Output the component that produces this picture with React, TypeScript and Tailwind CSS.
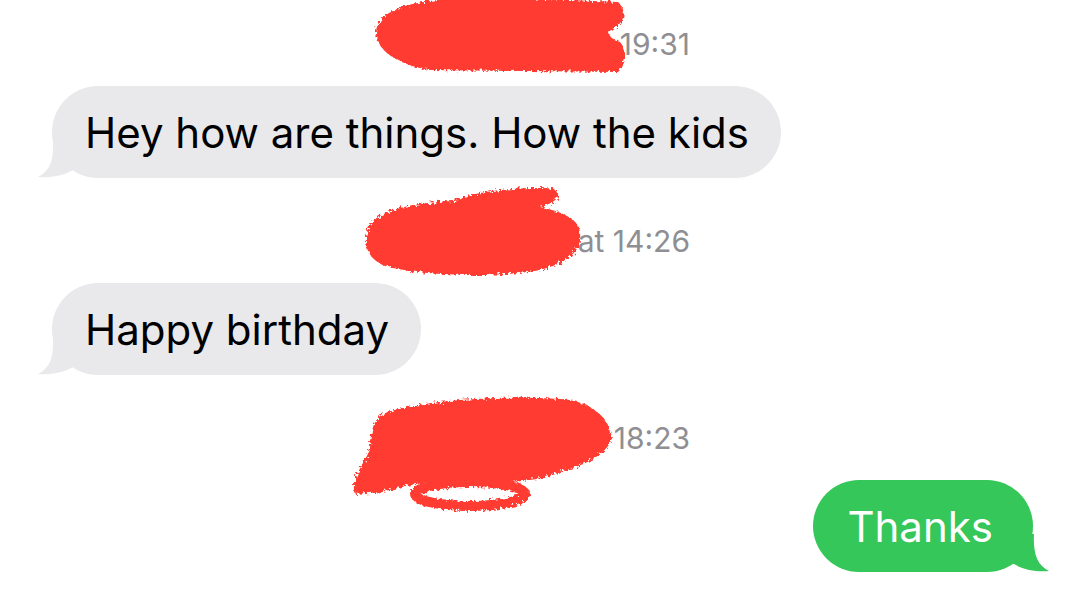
import React from 'react';

const font = { fontFamily: 'Inter, "Noto Sans", sans-serif' };

// red marker scribble drawn over the hidden sender names
const Scribble = ({ variant, offsetY }: { variant: number; offsetY: number }) => (
    <svg className="absolute left-0 top-0 overflow-visible pointer-events-none" width="1089" height="40">
        <defs>
            <filter id={`rough-${variant}`} x="-10%" y="-30%" width="120%" height="160%">
                <feTurbulence type="fractalNoise" baseFrequency="0.35" numOctaves="2" seed={variant} />
                <feDisplacementMap in="SourceGraphic" scale="7" />
            </filter>
        </defs>
        <g transform={`translate(0,${-offsetY})`} fill="#ff3b30" filter={`url(#rough-${variant})`}>
            {variant === 1 && (
                <path d="M395,10 C410,2 450,-4 520,-2 L618,2 C626,8 626,22 614,28 C606,32 608,38 620,42 C628,50 626,66 618,72 L430,70 C405,66 385,56 378,42 C372,28 380,16 395,10 Z" />
            )}
            {variant === 2 && (
                <>
                    <path d="M370,225 C380,207 430,200 470,201 C500,196 540,189 556,191 C563,197 552,204 540,207 C560,211 580,219 580,233 C582,250 570,262 540,270 C500,278 420,276 385,266 C365,258 362,240 370,225 Z" />
                    <path d="M455,200 C480,190 530,186 556,189 L556,195 C530,194 490,197 458,204 Z" />
                </>
            )}
            {variant === 3 && (
                <>
                    <path d="M382,414 C420,400 500,395 560,399 C594,401 610,420 612,438 C608,452 590,464 560,472 C540,482 500,484 470,480 C440,478 402,486 382,492 L355,494 C350,482 362,466 370,450 C370,435 372,422 382,414 Z" />
                    <ellipse cx="470" cy="494" rx="55" ry="12" fill="none" stroke="#ff3b30" strokeWidth="10" />
                </>
            )}
        </g>
    </svg>
);

const Stamp = ({ text, variant, top }: { text: string; variant: number; top: number }) => (
    <div className="relative h-10 flex items-center justify-end pr-[399px] text-[30px] text-[#8e8e93]">
        <span>{text}</span>
        <Scribble variant={variant} offsetY={top} />
    </div>
);

const Received = ({ text }: { text: string }) => (
    <div className="flex pl-[52px] mt-[22px]">
        <div className="relative">
            <svg className="absolute -left-[15px] bottom-0" width="44" height="38" viewBox="0 0 44 38">
                <path d="M16,0 C17,20 13,31 1,37 C13,38 26,36 36,30 L44,30 L44,0 Z" fill="#e9e9eb" />
            </svg>
            <div className="relative bg-[#e9e9eb] rounded-[46px] h-[92px] flex items-center pl-[33px] pr-[32px] text-[42px] text-black">
                {text}
            </div>
        </div>
    </div>
);

const Sent = ({ text }: { text: string }) => (
    <div className="flex justify-end pr-[56px] mt-[22px]">
        <div className="relative">
            <svg className="absolute -right-[17px] bottom-0" width="44" height="38" viewBox="0 0 44 38">
                <path d="M28,0 C27,20 31,31 43,37 C31,38 18,36 8,30 L0,30 L0,0 Z" fill="#35c759" />
            </svg>
            <div className="relative bg-[#35c759] rounded-[46px] h-[92px] flex items-center pl-[34px] pr-[40px] text-[42px] text-white">
                {text}
            </div>
        </div>
    </div>
);

const App = () => {
    return (
        <div className="w-[1089px] h-[600px] bg-white overflow-hidden pt-[24px]" style={font}>
            <Stamp text="19:31" variant={1} top={24} />
            <Received text="Hey how are things. How the kids" />

            <div className="mt-[43px]">
                <Stamp text="at 14:26" variant={2} top={221} />
            </div>
            <Received text="Happy birthday" />

            <div className="mt-[43px]">
                <Stamp text="18:23" variant={3} top={418} />
            </div>
            <Sent text="Thanks" />
        </div>
    );
};

export default App;
